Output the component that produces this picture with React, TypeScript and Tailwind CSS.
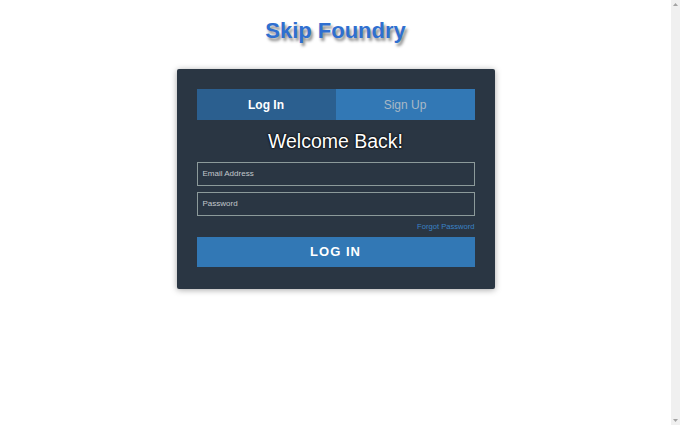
export default function App() {
  return (
    <div className="flex h-[425px] w-[680px] bg-white font-['Liberation_Sans',Arial,sans-serif]">
      <main className="flex w-[671px] flex-col items-center">
        <h1 className="mt-[16px] text-[22px] font-bold leading-[30px] text-[#2f6fd0] [text-shadow:2px_3px_3px_#8a8a8a]">
          Skip Foundry
        </h1>
        <section className="mt-[23px] w-[318px] rounded-[2px] bg-[#2a3643] px-[20px] pt-[20px] pb-[22px] shadow-[0_1px_6px_rgba(0,0,0,0.35)]">
          <div className="flex h-[31px]">
            <button className="flex-1 bg-[#2b5f8f] text-[12px] font-bold text-white">Log In</button>
            <button className="flex-1 bg-[#3278b5] text-[12px] text-[#a9b8c6]">Sign Up</button>
          </div>
          <h2 className="mt-[8px] text-center text-[19.5px] leading-[26px] text-white [text-shadow:0_0_2px_#000,0_0_2px_#000]">
            Welcome Back!
          </h2>
          <div className="mt-[8px] flex h-[24px] items-center border border-[#8c9a9a] px-[5px] text-[8px] text-[#c3c8cc]">
            Email Address
          </div>
          <div className="mt-[6px] flex h-[24px] items-center border border-[#8c9a9a] px-[5px] text-[8px] text-[#c3c8cc]">
            Password
          </div>
          <div className="mt-[6px] text-right text-[7.6px] leading-[10px] text-[#3a82c6]">Forgot Password</div>
          <button className="mt-[5px] h-[30px] w-full bg-[#3278b5] text-[13px] font-bold tracking-[1px] text-white">
            LOG IN
          </button>
        </section>
      </main>
      <div className="flex w-[9px] flex-col items-center justify-between bg-[#f0f0f0] py-[3px]">
        <svg width="5" height="3" viewBox="0 0 5 3"><path d="M0 3 L2.5 0 L5 3 Z" fill="#a3a3a3" /></svg>
        <svg width="5" height="3" viewBox="0 0 5 3"><path d="M0 0 L2.5 3 L5 0 Z" fill="#a3a3a3" /></svg>
      </div>
    </div>
  );
}
